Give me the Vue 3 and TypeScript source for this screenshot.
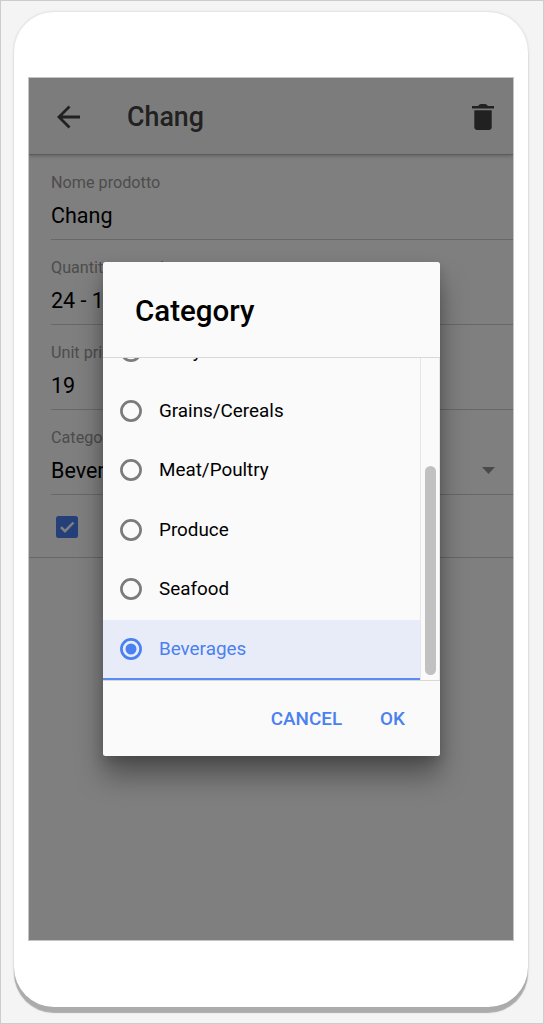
<script setup lang="ts">
import { ref, onMounted } from 'vue'

interface Field {
  label: string
  value: string
  select?: boolean
}

const fields: Field[] = [
  { label: 'Nome prodotto', value: 'Chang' },
  { label: 'Quantity per unit', value: '24 - 12 oz bottles' },
  { label: 'Unit price', value: '19' },
  { label: 'Category', value: 'Beverages', select: true },
]

const categories: string[] = [
  'Dairy Products',
  'Grains/Cereals',
  'Meat/Poultry',
  'Produce',
  'Seafood',
  'Beverages',
]
const selected = ref('Beverages')
const list = ref<HTMLElement | null>(null)

onMounted(() => {
  if (list.value) list.value.scrollTop = list.value.scrollHeight
})
</script>

<template>
  <div class="page">
    <div class="phone">
      <div class="screen">
        <header class="bar">
          <svg class="back" viewBox="0 0 24 24" width="24" height="24">
            <path d="M12.500 1.500 2 12l10.500 10.500M2.300 12H23" fill="none" stroke="#434343" stroke-width="2.800" />
          </svg>
          <h1>Chang</h1>
          <svg class="trash" viewBox="0 0 22 26" width="22" height="26">
            <path d="M0 2h6l1.500-1.600Q8 0 9 0h4q1 0 1.500.4L16 2h6v2.600H0zM2.300 6.200h17.400V23q0 3-3 3H5.300q-3 0-3-3z" fill="#434343" />
          </svg>
        </header>
        <main class="form">
          <div v-for="f in fields" :key="f.label" class="field">
            <label>{{ f.label }}</label>
            <div class="value">
              <span>{{ f.value }}</span>
              <svg v-if="f.select" class="caret" width="13" height="7" viewBox="0 0 13 7">
                <path d="M0 0h13L6.500 7z" fill="#949494" />
              </svg>
            </div>
          </div>
          <div class="check-row">
            <svg width="22" height="22" viewBox="0 0 22 22">
              <rect width="22" height="22" rx="2.500" fill="#4a80f0" />
              <path d="M5 11.200l4 4L17.500 6.500" fill="none" stroke="#fff" stroke-width="2.500" />
            </svg>
          </div>
        </main>
        <div class="overlay"></div>
        <section class="dialog">
          <h2>Category</h2>
          <div class="body">
            <div ref="list" class="list">
              <div
                v-for="c in categories"
                :key="c"
                class="option"
                :class="{ active: c === selected }"
                @click="selected = c"
              >
                <svg class="radio" width="22" height="22" viewBox="0 0 22 22">
                  <circle cx="11" cy="11" r="9.600" fill="none" stroke="currentColor" stroke-width="2.670" />
                  <circle v-if="c === selected" cx="11" cy="11" r="5.500" fill="currentColor" />
                </svg>
                <span class="name">{{ c }}</span>
              </div>
            </div>
            <div class="track"><div class="thumb"></div></div>
          </div>
          <footer>
            <button class="cancel">CANCEL</button>
            <button>OK</button>
          </footer>
        </section>
      </div>
    </div>
  </div>
</template>

<style>
body {
  margin: 0;
  overflow: hidden;
}
</style>

<style scoped>
* {
  box-sizing: border-box;
}
.page {
  width: 544px;
  height: 1024px;
  padding: 11px 14px 0;
  border: 1px solid #ccc;
  background: #f4f4f4;
  font-family: Roboto, "Liberation Sans", sans-serif;
  color: #000;
}
.phone {
  width: 514px;
  height: 995px;
  margin-left: -1px;
  padding: 65px 14px 0;
  border-radius: 40px;
  background: #fff;
  box-shadow: 0 6px 1px #ababab, 0 0 2px 1px #e0e0e0;
}
.screen {
  position: relative;
  width: 486px;
  height: 864px;
  overflow: hidden;
  border: 1px solid #c4c4c4;
  background: #fff;
}
.bar {
  display: flex;
  align-items: center;
  height: 77px;
  padding: 0 19px 0 28px;
  border-bottom: 1px solid #b8b8b8;
  background: #f9f9f9;
  box-shadow: 0 1px 4px rgba(0, 0, 0, 0.25);
}
.back {
  margin-top: 2px;
}
.trash {
  margin-top: 1px;
}
h1 {
  flex: 1;
  margin: 2px 0 0 46px;
  font-size: 26.800px;
  font-weight: 500;
  line-height: 32px;
  color: #434343;
}
.form {
  height: 403px;
  border-bottom: 1px solid #cfcfcf;
}
.field {
  height: 85px;
  margin-left: 22px;
  padding-top: 18px;
  border-bottom: 1px solid #d0d0d0;
}
.field label {
  display: block;
  font-size: 16.200px;
  line-height: 20px;
  color: #999;
}
.value {
  display: flex;
  align-items: center;
  justify-content: space-between;
  height: 26px;
  margin-top: 10px;
  padding-right: 18px;
  font-size: 21.500px;
  line-height: 26px;
}
.caret {
  margin-top: -1px;
}
.check-row {
  padding: 21px 0 0 27.400px;
}
.overlay {
  position: absolute;
  inset: 0;
  background: rgba(0, 0, 0, 0.5);
}
.dialog {
  position: absolute;
  left: 73.500px;
  top: 184px;
  width: 337.500px;
  height: 494.400px;
  border-radius: 2.500px;
  background: #fafafa;
  box-shadow: 0 20px 28px rgba(0, 0, 0, 0.36), 0 5px 12px rgba(0, 0, 0, 0.15);
}
h2 {
  height: 96px;
  margin: 0;
  padding: 33px 32.500px 0;
  border-bottom: 1px solid #d8d8d8;
  font-size: 29.500px;
  font-weight: 500;
  line-height: 33px;
}
.body {
  display: flex;
  height: 323px;
  border-bottom: 1px solid #d8d8d8;
}
.list {
  width: 317.500px;
  height: 322px;
  overflow: hidden;
}
.option {
  display: flex;
  align-items: center;
  gap: 17.500px;
  height: 59.500px;
  padding: 0 17px 1.400px;
  font-size: 18.850px;
}
.radio {
  flex-shrink: 0;
  color: #7b7b7b;
}
.name {
  padding-top: 0.500px;
}
.option:last-child {
  height: 60px;
}
.active {
  padding-bottom: 0;
  border-bottom: 2px solid #5a8bf0;
  background: #e8ecf8;
  color: #4a80f0;
}
.active .radio {
  color: #4a80f0;
}
.active .name {
  padding-top: 1px;
}
.track {
  display: flex;
  flex: 1;
  align-items: flex-end;
  padding: 0 0 5px 4px;
  border: solid #e6e6e6;
  border-width: 0 1px;
}
.thumb {
  width: 11px;
  height: 209px;
  border-radius: 6px;
  background: #c1c1c1;
}
footer {
  display: flex;
  justify-content: flex-end;
  padding: 27px 35px 0 0;
}
button {
  padding: 0;
  border: 0;
  background: none;
  font: 500 18.850px/22px Roboto, "Liberation Sans", sans-serif;
  color: #4a80f0;
}
.cancel {
  margin-right: 38px;
}
</style>
